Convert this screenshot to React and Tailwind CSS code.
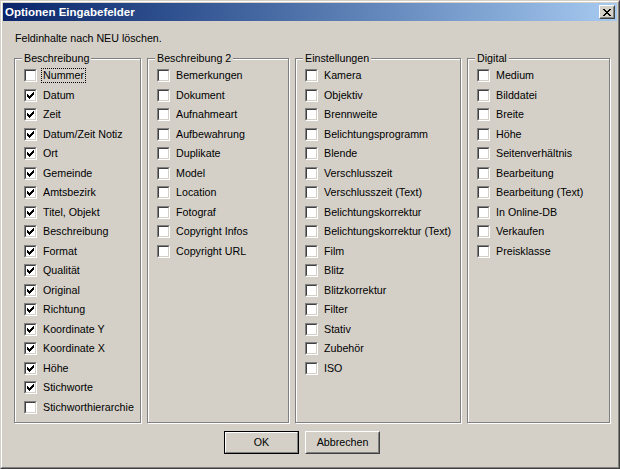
import React from 'react';

const col1 = [
  ['Nummer', false, true],
  ['Datum', true],
  ['Zeit', true],
  ['Datum/Zeit Notiz', true],
  ['Ort', true],
  ['Gemeinde', true],
  ['Amtsbezirk', true],
  ['Titel, Objekt', true],
  ['Beschreibung', true],
  ['Format', true],
  ['Qualität', true],
  ['Original', true],
  ['Richtung', true],
  ['Koordinate Y', true],
  ['Koordinate X', true],
  ['Höhe', true],
  ['Stichworte', true],
  ['Stichworthierarchie', false],
];

const col2 = ['Bemerkungen', 'Dokument', 'Aufnahmeart', 'Aufbewahrung', 'Duplikate', 'Model', 'Location', 'Fotograf', 'Copyright Infos', 'Copyright URL'];

const col3 = ['Kamera', 'Objektiv', 'Brennweite', 'Belichtungsprogramm', 'Blende', 'Verschlusszeit', 'Verschlusszeit (Text)', 'Belichtungskorrektur', 'Belichtungskorrektur (Text)', 'Film', 'Blitz', 'Blitzkorrektur', 'Filter', 'Stativ', 'Zubehör', 'ISO'];

const col4 = ['Medium', 'Bilddatei', 'Breite', 'Höhe', 'Seitenverhältnis', 'Bearbeitung', 'Bearbeitung (Text)', 'In Online-DB', 'Verkaufen', 'Preisklasse'];

// classic 7x7 check glyph, one 1x3 bar per column
const checkCols = [2, 3, 4, 3, 2, 1, 0];

const CheckBox = ({ label, checked, focus }) => (
  <div className="flex items-center h-[19.5px]">
    <span className="flex w-[13px] h-[13px] shrink-0 border border-t-[#808080] border-l-[#808080] border-b-white border-r-white">
      <span className="flex-1 border border-t-[#404040] border-l-[#404040] border-b-[#d4d0c8] border-r-[#d4d0c8] bg-white">
        {checked && (
          <svg width="9" height="9" viewBox="0 0 9 9" shapeRendering="crispEdges" className="block">
            {checkCols.map((y, i) => (
              <rect key={i} x={i + 1} y={y + 1} width="1" height="3" fill="#000" />
            ))}
          </svg>
        )}
      </span>
    </span>
    <span
      className={
        'ml-[4px] px-[1px] leading-[13px] border ' +
        (focus ? 'border-dotted border-black' : 'border-transparent')
      }
    >
      {label}
    </span>
  </div>
);

const GroupBox = ({ title, width, children }) => (
  <div
    className={
      'relative h-[365px] border border-[#808080] shadow-[inset_1px_1px_0_#fff,1px_1px_0_#fff] pl-[9px] pt-[7px] ' +
      width
    }
  >
    <span className="absolute top-[-7px] left-[7px] px-[2px] bg-[#d4d0c8] leading-[13px]">{title}</span>
    {children}
  </div>
);

const Button = ({ label, isDefault }) => (
  <div
    className={
      'flex w-[75px] h-[23px] ' +
      (isDefault
        ? 'border border-black'
        : 'border border-t-white border-l-white border-b-[#404040] border-r-[#404040]')
    }
  >
    <div
      className={
        'flex-1 flex items-center justify-center border ' +
        (isDefault
          ? 'border-t-white border-l-white border-b-[#808080] border-r-[#808080]'
          : 'border-t-[#d4d0c8] border-l-[#d4d0c8] border-b-[#808080] border-r-[#808080]')
      }
    >
      {label}
    </div>
  </div>
);

const xRows = [
  [0, 2, 6, 2],
  [1, 2, 5, 2],
  [2, 4],
  [3, 2],
  [2, 4],
  [1, 2, 5, 2],
  [0, 2, 6, 2],
];

const CloseButton = () => (
  <div className="flex w-[16px] h-[14px] mr-[2px] border border-t-white border-l-white border-b-[#404040] border-r-[#404040] bg-[#d4d0c8]">
    <div className="flex-1 flex items-center justify-center border border-t-[#d4d0c8] border-l-[#d4d0c8] border-b-[#808080] border-r-[#808080]">
      <svg width="8" height="7" viewBox="0 0 8 7" shapeRendering="crispEdges" className="block">
        {xRows.map((r, y) => (
          <g key={y}>
            <rect x={r[0]} y={y} width={r[1]} height="1" fill="#000" />
            {r.length > 2 && <rect x={r[2]} y={y} width={r[3]} height="1" fill="#000" />}
          </g>
        ))}
      </svg>
    </div>
  </div>
);

export default function App() {
  return (
    <div
      className="w-[620px] h-[469px] flex border border-t-[#d4d0c8] border-l-[#d4d0c8] border-b-[#404040] border-r-[#404040] text-[10.7px] text-black"
      style={{ fontFamily: '"Liberation Sans", Arial, sans-serif' }}
    >
      <div className="flex-1 flex flex-col p-[1px] bg-[#d4d0c8] border border-t-white border-l-white border-b-[#808080] border-r-[#808080]">
        {/* title bar */}
        <div className="h-[18px] shrink-0 flex items-center justify-between bg-linear-to-r from-[#0a246a] to-[#a6caf0]">
          <span className="pl-[2px] text-white font-bold text-[11.5px] leading-[14px]">Optionen Eingabefelder</span>
          <CloseButton />
        </div>

        <div className="flex-1 flex flex-col">
          <div className="mt-[11px] ml-[12px] leading-[13px]">Feldinhalte nach NEU löschen.</div>

          <div className="flex mt-[13px] ml-[11px] gap-[6px]">
            <GroupBox title="Beschreibung" width="w-[127px]">
              {col1.map(([l, c, f]) => (
                <CheckBox key={l} label={l} checked={c} focus={f} />
              ))}
            </GroupBox>
            <GroupBox title="Beschreibung 2" width="w-[142px]">
              {col2.map((l) => (
                <CheckBox key={l} label={l} />
              ))}
            </GroupBox>
            <GroupBox title="Einstellungen" width="w-[166px]">
              {col3.map((l) => (
                <CheckBox key={l} label={l} />
              ))}
            </GroupBox>
            <GroupBox title="Digital" width="w-[143px]">
              {col4.map((l) => (
                <CheckBox key={l} label={l} />
              ))}
            </GroupBox>
          </div>

          <div className="flex mt-[8px] ml-[221px] gap-[6px]">
            <Button label="OK" isDefault />
            <Button label="Abbrechen" />
          </div>
        </div>
      </div>
    </div>
  );
}
